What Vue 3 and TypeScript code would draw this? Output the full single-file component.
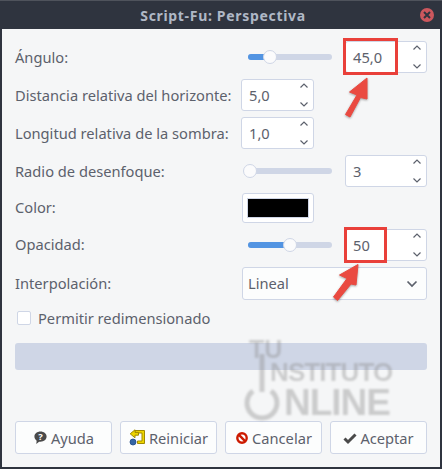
<script setup lang="ts">
interface SliderRow {
  label: string
  value: string
  fraction: number
}

const KNOB_TRAVEL = 80

const angle: SliderRow = { label: 'Ángulo:', value: '45,0', fraction: 0.25 }
const blur: SliderRow = { label: 'Radio de desenfoque:', value: '3', fraction: 0 }
const opacity: SliderRow = { label: 'Opacidad:', value: '50', fraction: 0.5 }

const knobLeft = (row: SliderRow) => KNOB_TRAVEL * row.fraction - 5
</script>

<template>
  <div class="window">
    <header class="titlebar">
      <span class="title">Script-Fu: Perspectiva</span>
      <span class="close">
        <svg width="8" height="8" viewBox="0 0 8 8"><path d="M1 1l6 6M7 1L1 7" stroke="#2f343f" stroke-width="2" /></svg>
      </span>
    </header>

    <main class="body">
      <div class="form">
        <label class="label">{{ angle.label }}</label>
        <div class="slider-cell">
          <div class="slider">
            <div class="fill" :style="{ width: knobLeft(angle) + 7 + 'px' }" />
            <div class="knob" :style="{ left: knobLeft(angle) + 'px' }" />
          </div>
          <div class="spin wide">
            <span class="val boxed">{{ angle.value }}</span>
            <span class="arrows"><svg width="10" height="28" viewBox="0 0 10 28"><path d="M1.500 6.500L5 3l3.500 3.500M1.500 21.500L5 25l3.500-3.500" fill="none" stroke="#5c616c" stroke-width="1.200" /></svg></span>
          </div>
        </div>

        <label class="label">Distancia relativa del horizonte:</label>
        <div class="spin narrow">
          <span class="val">5,0</span>
          <span class="arrows"><svg width="10" height="28" viewBox="0 0 10 28"><path d="M1.500 6.500L5 3l3.500 3.500M1.500 21.500L5 25l3.500-3.500" fill="none" stroke="#5c616c" stroke-width="1.200" /></svg></span>
        </div>

        <label class="label">Longitud relativa de la sombra:</label>
        <div class="spin narrow">
          <span class="val">1,0</span>
          <span class="arrows"><svg width="10" height="28" viewBox="0 0 10 28"><path d="M1.500 6.500L5 3l3.500 3.500M1.500 21.500L5 25l3.500-3.500" fill="none" stroke="#5c616c" stroke-width="1.200" /></svg></span>
        </div>

        <label class="label">{{ blur.label }}</label>
        <div class="slider-cell">
          <div class="slider">
            <div class="knob" :style="{ left: knobLeft(blur) + 'px' }" />
          </div>
          <div class="spin wide">
            <span class="val">{{ blur.value }}</span>
            <span class="arrows"><svg width="10" height="28" viewBox="0 0 10 28"><path d="M1.500 6.500L5 3l3.500 3.500M1.500 21.500L5 25l3.500-3.500" fill="none" stroke="#5c616c" stroke-width="1.200" /></svg></span>
          </div>
        </div>

        <label class="label up">Color:</label>
        <div class="color-btn"><div class="swatch" /></div>

        <label class="label up">{{ opacity.label }}</label>
        <div class="slider-cell">
          <div class="slider">
            <div class="fill" :style="{ width: knobLeft(opacity) + 7 + 'px' }" />
            <div class="knob" :style="{ left: knobLeft(opacity) + 'px' }" />
          </div>
          <div class="spin wide">
            <span class="val boxed short">{{ opacity.value }}</span>
            <span class="arrows"><svg width="10" height="28" viewBox="0 0 10 28"><path d="M1.500 6.500L5 3l3.500 3.500M1.500 21.500L5 25l3.500-3.500" fill="none" stroke="#5c616c" stroke-width="1.200" /></svg></span>
          </div>
        </div>

        <label class="label up">Interpolación:</label>
        <div class="combo">
          <span class="up">Lineal</span>
          <svg width="12" height="8" viewBox="0 0 12 8"><path d="M1.500 1.500L6 6l4.500-4.500" fill="none" stroke="#5c616c" stroke-width="1.700" /></svg>
        </div>
      </div>

      <div class="check-row">
        <span class="check" />
        <span>Permitir redimensionado</span>
      </div>

      <div class="progress" />

      <footer class="actions">
        <button class="btn">
          <svg width="15" height="15" viewBox="0 0 16 16">
            <path d="M8 1.500c3.700 0 6.500 2.400 6.500 5.500S11.700 12.500 8 12.500c-.5 0-1 0-1.500-.1L3.500 15l.4-3.600C2.400 10.400 1.500 8.800 1.500 7 1.500 3.900 4.300 1.500 8 1.500z" fill="#4a4a4a" />
            <text x="8" y="11" text-anchor="middle" class="q">?</text>
          </svg>
          <span>Ayuda</span>
        </button>
        <button class="btn">
          <svg width="17" height="17" viewBox="0 0 17 17">
            <path d="M6 1.500h9.500v13H8.500v-2.500h4.500V4H6z" fill="#edd400" stroke="#a08a00" stroke-width="1" />
            <path d="M6 .8L1.200 4.800 6 8.800V6.200h3.500V3.400H6z" fill="#edd400" stroke="#a08a00" stroke-width="1" />
            <circle cx="4" cy="13" r="3" fill="#3465a4" stroke="#204a87" stroke-width=".8" />
          </svg>
          <span>Reiniciar</span>
        </button>
        <button class="btn">
          <svg width="14" height="14" viewBox="0 0 14 14">
            <circle cx="7" cy="7" r="4.700" fill="#fff" stroke="#cc1a00" stroke-width="2.400" />
            <path d="M3.700 3.700l6.600 6.600" stroke="#cc1a00" stroke-width="2.400" />
          </svg>
          <span>Cancelar</span>
        </button>
        <button class="btn">
          <svg width="14" height="14" viewBox="0 0 14 14"><path d="M1.500 7.500L5 11l7.500-7.500" fill="none" stroke="#4a4a4a" stroke-width="3" /></svg>
          <span>Aceptar</span>
        </button>
      </footer>
    </main>

    <div class="watermark">
      <span class="wm-tu">TU</span>
      <span class="wm-inst">NSTITUTO</span>
      <span class="wm-online">NLINE</span>
      <svg class="wm-power" width="40" height="70" viewBox="0 0 40 70">
        <path d="M11 39a15 15 0 1 0 18 0" fill="none" stroke="#8c8c8c" stroke-width="5" />
        <path d="M20 2v38" stroke="#8c8c8c" stroke-width="5" />
      </svg>
    </div>

    <svg class="callouts" width="442" height="469" viewBox="0 0 442 469">
      <g fill="#ea4a41" stroke="#ea4a41" stroke-width="1" stroke-linejoin="round">
        <path class="shade" d="M367 78L349.500 92 357 95 345.500 114.500 350 117 360.500 97.500 367 99z" />
        <path class="shade" d="M358 264.500L339.500 275 347 278.500 333.500 297 337.500 300.500 351 284 356 285z" />
      </g>
    </svg>
  </div>
</template>

<style>
html,
body {
  margin: 0;
  background: #2f343f;
}
</style>

<style scoped>
.window {
  position: relative;
  width: 442px;
  height: 469px;
  box-sizing: border-box;
  display: flex;
  flex-direction: column;
  background: #2f343f;
  border-top: 1px solid #4f535c;
  font-family: 'Noto Sans', sans-serif;
  font-size: 14.67px;
  color: #5c616c;
  overflow: hidden;
}

.titlebar {
  height: 28px;
  flex: none;
  position: relative;
  display: flex;
  align-items: center;
  justify-content: center;
  padding-left: 4px;
}

.title {
  color: #afb8c6;
  font-weight: 700;
  font-size: 14px;
  letter-spacing: 0.68px;
}

.close {
  position: absolute;
  right: 8px;
  top: 7px;
  width: 14px;
  height: 14px;
  border-radius: 50%;
  background: #cc575d;
  display: flex;
  align-items: center;
  justify-content: center;
}

.body {
  flex: none;
  height: 438px;
  margin: 0 2px;
  box-sizing: border-box;
  background: #f5f6f7;
  padding: 12px 13px 13px;
  display: flex;
  flex-direction: column;
}

.form {
  display: grid;
  grid-template-columns: 226px 186px;
  grid-template-rows: 32px 32px 32px 32px 30px 32px 33px;
  row-gap: 6px;
  align-items: center;
}

.label {
  line-height: 20px;
}

.up {
  margin-bottom: 2px;
}

.slider-cell {
  display: flex;
  align-items: center;
  height: 32px;
}

.slider {
  position: relative;
  width: 84px;
  height: 6px;
  margin-left: 7px;
  margin-right: 13px;
  border-radius: 3px;
  background: #cfd6e6;
}

.fill {
  height: 6px;
  border-radius: 3px;
  background: #5294e2;
}

.knob {
  position: absolute;
  top: -4px;
  width: 14px;
  height: 14px;
  box-sizing: border-box;
  border-radius: 50%;
  background: #fbfbfc;
  border: 1px solid #cfd6e6;
}

.spin {
  box-sizing: border-box;
  height: 32px;
  display: flex;
  align-items: center;
  justify-content: space-between;
  background: #fff;
  border: 1px solid #cfd6e6;
  border-radius: 3px;
  position: relative;
}

.narrow {
  width: 73px;
}

.wide {
  width: 82px;
}

.val {
  padding-left: 7px;
  line-height: 20px;
}

.boxed::after {
  content: '';
  position: absolute;
  left: -3px;
  top: -4px;
  width: 55px;
  height: 37px;
  box-sizing: border-box;
  border: 3px solid #e9403a;
}

.short::after {
  width: 43px;
  left: -2px;
  top: -3px;
  height: 36px;
}

.arrows {
  display: flex;
  padding-right: 4px;
}

.color-btn {
  box-sizing: border-box;
  width: 72px;
  height: 30px;
  margin-left: 1px;
  background: #fff;
  border: 1px solid #cfd6e6;
  border-radius: 3px;
  padding: 5px;
}

.swatch {
  height: 100%;
  background: #000;
  outline: 1px solid #cfd6e6;
}

.combo {
  box-sizing: border-box;
  height: 33px;
  margin-left: 1px;
  padding: 0 8px 0 5px;
  background: #fcfdfd;
  border: 1px solid #cfd6e6;
  border-radius: 3px;
  display: flex;
  align-items: center;
  justify-content: space-between;
}

.check-row {
  margin-top: 8px;
  margin-left: 2px;
  height: 20px;
  display: flex;
  align-items: center;
  gap: 7px;
}

.check {
  width: 12px;
  height: 12px;
  border: 1px solid #cfd6e6;
  border-radius: 2px;
  background: #fff;
}

.progress {
  margin-top: 15px;
  height: 27px;
  border-radius: 3px;
  background: #cfd6e6;
}

.actions {
  margin-top: auto;
  display: grid;
  grid-template-columns: repeat(4, 97px);
  column-gap: 8px;
}

.btn {
  box-sizing: border-box;
  height: 33px;
  padding: 0;
  display: flex;
  align-items: center;
  justify-content: center;
  gap: 3px;
  font: inherit;
  color: inherit;
  background: #fcfdfd;
  border: 1px solid #cfd6e6;
  border-radius: 3px;
}

.q {
  font: 700 10px 'Noto Sans', sans-serif;
  fill: #fff;
}

.watermark {
  position: absolute;
  inset: 0;
  pointer-events: none;
  filter: blur(1px);
  opacity: 0.4;
  font-family: 'Liberation Sans', sans-serif;
  font-weight: 700;
  color: #8c8c8c;
}

.watermark span {
  position: absolute;
  line-height: 0.72;
}

.wm-tu {
  left: 249px;
  top: 339px;
  font-size: 25px;
}

.wm-inst {
  left: 270px;
  top: 362px;
  font-size: 26px;
  letter-spacing: -0.9px;
}

.wm-online {
  left: 284px;
  top: 389px;
  font-size: 37px;
  letter-spacing: -1px;
}

.wm-power {
  position: absolute;
  left: 242px;
  top: 351px;
}

.callouts {
  position: absolute;
  left: 0;
  top: -1px;
  pointer-events: none;
}

.shade {
  filter: drop-shadow(0 1px 1px rgba(0, 0, 0, 0.35));
}
</style>
